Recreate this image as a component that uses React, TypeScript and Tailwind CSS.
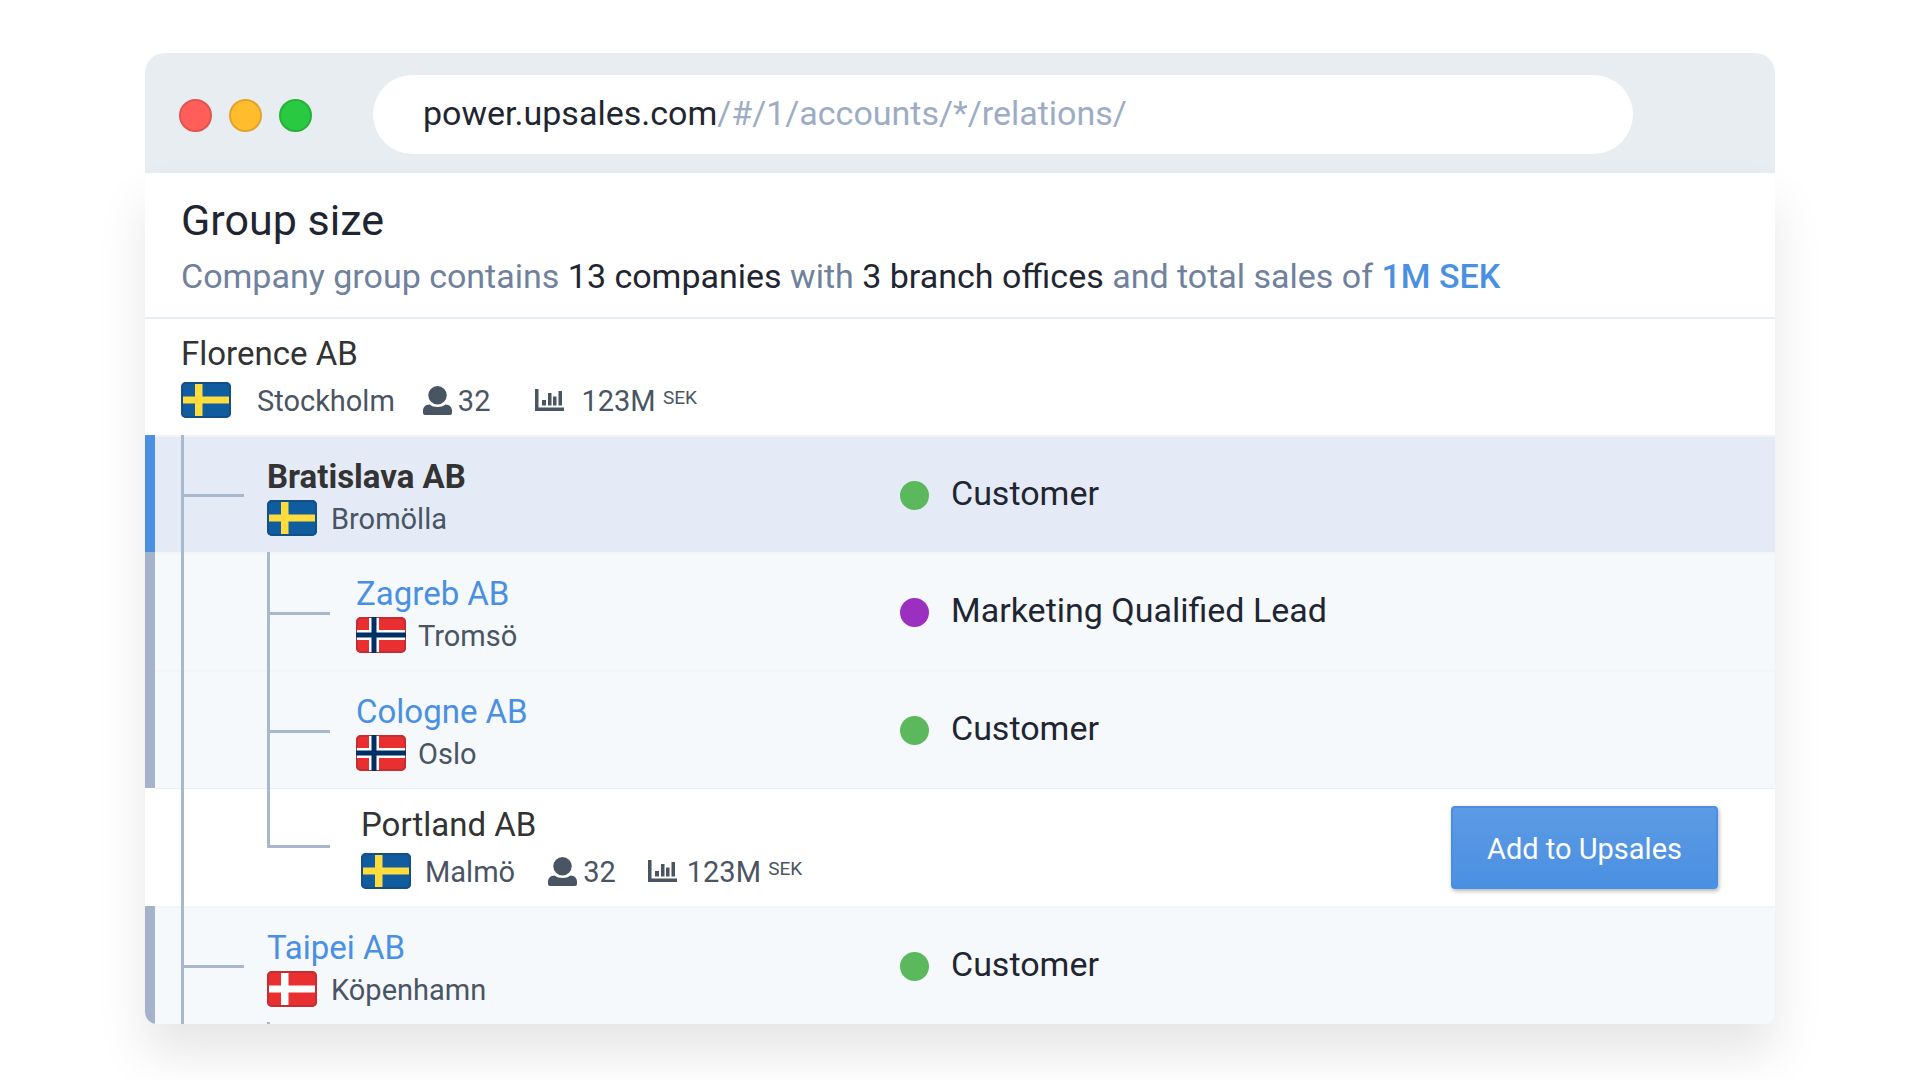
import type { ReactNode } from 'react';

type FlagCode = 'se' | 'no' | 'dk';

interface Company {
  name: string;
  city: string;
  flag: FlagCode;
  level: number;
  kind: 'root' | 'current' | 'account' | 'prospect';
  status?: string;
  statusColor?: string;
  isLast?: boolean;
  hasChildren?: boolean;
}

const companies: Company[] = [
  { name: 'Florence AB', city: 'Stockholm', flag: 'se', level: 0, kind: 'root' },
  { name: 'Bratislava AB', city: 'Bromölla', flag: 'se', level: 1, kind: 'current', status: 'Customer', statusColor: 'bg-[#5cb85c]' },
  { name: 'Zagreb AB', city: 'Tromsö', flag: 'no', level: 2, kind: 'account', status: 'Marketing Qualified Lead', statusColor: 'bg-[#9b30c0]' },
  { name: 'Cologne AB', city: 'Oslo', flag: 'no', level: 2, kind: 'account', status: 'Customer', statusColor: 'bg-[#5cb85c]' },
  { name: 'Portland AB', city: 'Malmö', flag: 'se', level: 2, kind: 'prospect', isLast: true },
  { name: 'Taipei AB', city: 'Köpenhamn', flag: 'dk', level: 1, kind: 'account', status: 'Customer', statusColor: 'bg-[#5cb85c]', hasChildren: true },
];

function Flag({ code }: { code: FlagCode }) {
  const bg = code === 'se' ? '#0f5c9f' : '#e92f30';
  const edge = code === 'se' ? '#164f88' : '#c42e31';
  return (
    <svg className="h-9 w-[50px] shrink-0" viewBox="0 0 50 36" aria-hidden="true">
      <rect width="50" height="36" rx="5" fill={bg} />
      <rect x="1" y="1" width="48" height="34" rx="4" fill="none" stroke={edge} strokeWidth="2" />
      {code === 'se' && <path d="M14 2h7.500v12.500H48v7H21.500V34H14V21.500H2v-7h12z" fill="#ffdc3e" />}
      {code === 'dk' && <path d="M14 2h7.500v12.500H48v7H21.500V34H14V21.500H2v-7h12z" fill="#fff" />}
      {code === 'no' && (
        <>
          <path d="M13 1h10v12h26v10H23v12H13V23H1V13h12z" fill="#fff" />
          <path d="M15.500 0h5v15.500H50v5H20.500V36h-5V20.500H0v-5h15.500z" fill="#002f66" />
        </>
      )}
    </svg>
  );
}

function UserIcon() {
  return (
    <svg className="h-[29px] w-[29px]" viewBox="0 0 29 29" fill="#4a5563" aria-hidden="true">
      <circle cx="14.500" cy="9.200" r="9.200" />
      <path d="M6.500 18.500c2 1.700 5 2.500 8 2.500s6-.8 8-2.500c4 .3 6.500 2.300 6.500 6.500v2a2 2 0 0 1-2 2H2a2 2 0 0 1-2-2v-2c0-4.200 2.500-6.200 6.500-6.500z" />
    </svg>
  );
}

function ChartIcon() {
  return (
    <svg className="h-[22px] w-[29px]" viewBox="0 0 29 22" fill="#4a5563" aria-hidden="true">
      <path d="M0 0h3.500v18.500H29V22H0zM7 11h4v5.500H7zM13 4h3.500v12.500H13zM18 7.500h3.500v9H18zM23.500 2H27v14.500h-3.500z" />
    </svg>
  );
}

function Stats({ root }: { root: boolean }) {
  return (
    <>
      <span className={`flex items-center gap-1.5 ${root ? 'ml-7' : 'ml-[33px]'}`}>
        <UserIcon />
        <span className="pt-0.5">32</span>
      </span>
      <span className={`flex items-center ${root ? 'ml-[45px] gap-[17px]' : 'ml-8 gap-2.5'}`}>
        <ChartIcon />
        <span className="pt-0.5">
          123M <sup className="top-[-7px] text-[19px] leading-none">SEK</sup>
        </span>
      </span>
    </>
  );
}

// vertical rails plus the horizontal branch that leads to the company name
function Branches({ company }: { company: Company }) {
  const { level, isLast, hasChildren } = company;
  return (
    <div className="pointer-events-none absolute inset-0" aria-hidden="true">
      {level > 0 && <div className="absolute inset-y-0 left-9 w-[3px] bg-[#a9b7cd]" />}
      {level === 1 && <div className="absolute top-[59px] left-9 h-[3px] w-[63px] bg-[#a9b7cd]" />}
      {level === 2 && (
        <>
          <div className={`absolute top-0 left-[122px] w-[3px] bg-[#a9b7cd] ${isLast ? 'h-[60px]' : 'h-full'}`} />
          <div className={`absolute left-[122px] h-[3px] w-[63px] bg-[#a9b7cd] ${isLast ? 'top-[57px]' : 'top-[60px]'}`} />
        </>
      )}
      {hasChildren && <div className="absolute bottom-0 left-[122px] h-0.5 w-[3px] bg-[#a9b7cd]" />}
    </div>
  );
}

function CompanyName({ company }: { company: Company }) {
  if (company.kind === 'account') {
    return <a href="#" className="text-[#4a90e2]">{company.name}</a>;
  }
  return <span className={`text-[#333] ${company.kind === 'current' ? 'font-bold' : ''}`}>{company.name}</span>;
}

const rowStyles = {
  root: 'h-[116px] border-transparent bg-white pt-[15px]',
  current: 'h-[117px] border-[#4a90e2] bg-[#e4ebf7] pt-[22px] shadow-[inset_0_2px_0_#f1f3f5]',
  account: 'h-[118px] border-[#a4b2ca] bg-[#f5f9fc] pt-[22px] shadow-[inset_0_2px_0_#f3f5f7]',
  prospect: 'h-[118px] border-transparent bg-white pt-[17px] shadow-[inset_0_1px_0_#e8eef3]',
};

const indents = ['pl-[26px]', 'pl-28', 'pl-[201px]'];

function CompanyRow({ company }: { company: Company }) {
  const { kind, level, city, flag, status, statusColor } = company;
  const hasStats = kind === 'root' || kind === 'prospect';
  const cityGap = kind === 'root' ? 'ml-[26px]' : kind === 'account' && level === 2 ? 'ml-3' : 'ml-3.5';
  return (
    <li className="relative">
      <div className={`flex border-l-[10px] ${rowStyles[kind]}`}>
        <div className={`w-[745px] shrink-0 ${kind === 'prospect' ? 'pl-[206px]' : indents[level]}`}>
          <div className="text-[33px] leading-10">
            <CompanyName company={company} />
          </div>
          <div className={`flex items-center text-[29px] leading-9 text-[#4a5563] ${hasStats ? 'mt-[7px]' : 'mt-0.5'}`}>
            <Flag code={flag} />
            <span className={`pt-0.5 ${cityGap}`}>{city}</span>
            {hasStats && <Stats root={kind === 'root'} />}
          </div>
        </div>
        {status && (
          <div className="flex h-[77px] items-center gap-[22px] text-[34px] text-[#1f2631]">
            <span className={`h-[29px] w-[29px] rounded-full ${statusColor}`} />
            <span className="pb-[5px]">{status}</span>
          </div>
        )}
        {kind === 'prospect' && (
          <button
            type="button"
            className="mt-px mr-[57px] ml-auto h-[83px] w-[267px] rounded border-2 border-[#4a90e2] bg-linear-to-b from-[#5c9ae4] to-[#4a90e2] pt-1 text-[29px] text-white shadow-[1px_2px_4px_rgba(0,0,0,0.3)]"
          >
            Add to Upsales
          </button>
        )}
      </div>
      <Branches company={company} />
    </li>
  );
}

function Strong({ children }: { children: ReactNode }) {
  return <span className="text-[#1f2631]">{children}</span>;
}

export default function App() {
  return (
    <div className="min-h-screen bg-white px-[145px] pt-[53px] pb-14 font-['Roboto',sans-serif]">
      <header className="flex h-[120px] items-center rounded-t-[20px] bg-[#e8edf1] pt-0.5 pr-[142px] pl-[34px]">
        <div className="flex gap-[17px] pt-0.5">
          <span className="h-[33px] w-[33px] rounded-full border-2 border-[#e2544f] bg-[#ff5f58]" />
          <span className="h-[33px] w-[33px] rounded-full border-2 border-[#e0a32c] bg-[#ffbd2e]" />
          <span className="h-[33px] w-[33px] rounded-full border-2 border-[#24b13a] bg-[#29ca41]" />
        </div>
        <div className="ml-[61px] flex h-[79px] flex-1 items-center rounded-full bg-white pb-0.5 pl-[50px] text-[34px] text-[#9dacc5]">
          <Strong>power.upsales.com</Strong>/#/1/accounts/*/relations/
        </div>
      </header>
      <main className="overflow-hidden rounded-b-xl bg-white shadow-[0_30px_50px_rgba(0,0,0,0.1)]">
        <section className="h-[146px] border-b-2 border-[#e8eef3] pt-5 pl-9">
          <h1 className="text-[43px] leading-[54px] text-[#1f2631]">Group size</h1>
          <p className="mt-[9px] text-[34px] leading-10 text-[#6f819c]">
            Company group contains <Strong>13 companies</Strong> with <Strong>3 branch offices</Strong> and total sales of{' '}
            <span className="font-medium text-[#4a90e2]">1M SEK</span>
          </p>
        </section>
        <ul>
          {companies.map((company) => (
            <CompanyRow key={company.name} company={company} />
          ))}
        </ul>
      </main>
    </div>
  );
}
